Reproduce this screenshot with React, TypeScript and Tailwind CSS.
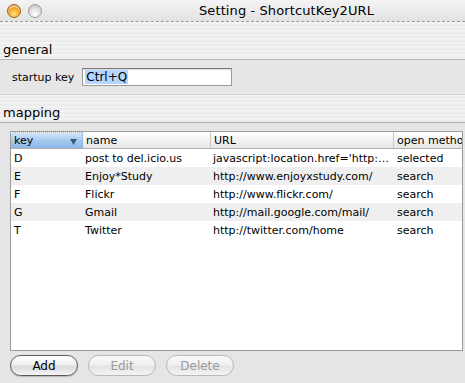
import React from "react";

const rows = [
  ["D", "post to del.icio.us", "javascript:location.href='http://del.icio.us/post?url='", "selected"],
  ["E", "Enjoy*Study", "http://www.enjoyxstudy.com/", "search"],
  ["F", "Flickr", "http://www.flickr.com/", "search"],
  ["G", "Gmail", "http://mail.google.com/mail/", "search"],
  ["T", "Twitter", "http://twitter.com/home", "search"],
];

export default function App() {
  return (
    <div
      className="w-[465px] h-[383px] overflow-hidden flex flex-col text-[#000] bg-[repeating-linear-gradient(180deg,#ececec_0px,#ececec_2px,#f3f3f3_2px,#f3f3f3_4px)]"
      style={{ fontFamily: '"DejaVu Sans", "Liberation Sans", sans-serif' }}
    >
      {/* title bar */}
      <div className="relative h-[22px] shrink-0 flex items-center border-b border-dashed border-[#9a9a9a] bg-[linear-gradient(180deg,#f4f4f4,#e2e2e2)]">
        <div className="ml-[7px] w-[14px] h-[14px] rounded-full border border-[#a0601a] bg-[radial-gradient(circle_at_50%_75%,#ffe080_0%,#f7a928_50%,#c26a10_100%)] shadow-[inset_0_2px_1px_rgba(255,255,255,0.6)]" />
        <div className="ml-[7px] w-[14px] h-[14px] rounded-full border border-[#9c9c9c] bg-[radial-gradient(circle_at_50%_75%,#ffffff_0%,#dedede_55%,#b5b5b5_100%)]" />
        <div className="ml-[157px] text-[13px] leading-none tracking-[0.1px]">Setting - ShortcutKey2URL</div>
      </div>

      {/* general header */}
      <div className="h-[38px] shrink-0 flex items-end pl-[3px] pb-[3px] border-b border-[#b4b4b4]">
        <span className="text-[13px] leading-none">general</span>
      </div>

      {/* startup key row */}
      <div className="h-[35px] shrink-0 flex items-center pl-[12px] bg-[#e6e6e6] border-b border-[#d2d2d2]">
        <span className="text-[11px] leading-none">startup key</span>
        <div className="ml-[8px] w-[150px] h-[18px] bg-white border border-[#9a9a9a] border-t-[#7a7a7a] flex items-center pl-[2px] shadow-[inset_0_1px_1px_rgba(0,0,0,0.15)]">
          <span className="text-[12px] leading-[14px] bg-[#b5d5ff] px-px">Ctrl+Q</span>
        </div>
      </div>

      {/* mapping header */}
      <div className="h-[28px] shrink-0 flex items-end pl-[3px] pb-[3px] border-b border-[#b4b4b4]">
        <span className="text-[13px] leading-none">mapping</span>
      </div>

      {/* table area */}
      <div className="flex-1 flex flex-col pt-[8px] pl-[10px] pr-[2px] bg-[#e5e5e5]">
        <div className="h-[220px] bg-white border border-[#9c9c9c] flex flex-col overflow-hidden">
          {/* header */}
          <div className="h-[17px] shrink-0 flex text-[11px] leading-none border-b border-[#b0b0b0] bg-[linear-gradient(180deg,#ffffff,#f2f2f2_50%,#e6e6e6)]">
            <div className="w-[72px] shrink-0 relative flex items-center pl-[3px] border-r border-[#8aa8cc] border-t border-dotted border-t-[#ffffff] bg-[linear-gradient(180deg,#d4e6f8,#a6c9ee_50%,#8cb8e8)]">
              key
              <svg className="absolute right-[5px] top-[6px]" width="7" height="6" viewBox="0 0 7 6">
                <path d="M0 0H7L3.5 6Z" fill="#3a5a80" />
              </svg>
            </div>
            <div className="w-[128px] shrink-0 flex items-center pl-[3px] border-r border-[#c8c8c8]">name</div>
            <div className="w-[183px] shrink-0 flex items-center pl-[3px] border-r border-[#c8c8c8]">URL</div>
            <div className="flex-1 flex items-center pl-[3px] whitespace-nowrap overflow-hidden">open method</div>
          </div>
          {rows.map((r, i) => (
            <div
              key={r[0]}
              className={`h-[18px] shrink-0 flex items-center text-[11px] leading-none ${i % 2 === 1 ? "bg-[#efefef]" : "bg-white"}`}
            >
              <div className="w-[72px] shrink-0 pl-[3px]">{r[0]}</div>
              <div className="w-[128px] shrink-0 pl-[2px]">{r[1]}</div>
              <div className="w-[183px] shrink-0 pl-[2px] pr-[2px] whitespace-nowrap overflow-hidden text-ellipsis">{r[2]}</div>
              <div className="flex-1 pl-[3px] whitespace-nowrap">{r[3]}</div>
            </div>
          ))}
        </div>

        {/* buttons */}
        <div className="flex gap-[10px] mt-[4px]">
          <button className="w-[68px] h-[21px] rounded-full border border-[#5a5a5a] bg-[linear-gradient(180deg,#ffffff,#f0f0f0_45%,#dcdcdc_55%,#f4f4f4)] text-[12px] leading-none text-black shadow-[0_1px_1px_rgba(0,0,0,0.2)]">
            Add
          </button>
          <button className="w-[68px] h-[21px] rounded-full border border-[#b8b8b8] bg-[linear-gradient(180deg,#fafafa,#f0f0f0_45%,#e4e4e4_55%,#f4f4f4)] text-[12px] leading-none text-[#9a9a9a]">
            Edit
          </button>
          <button className="w-[68px] h-[21px] rounded-full border border-[#b8b8b8] bg-[linear-gradient(180deg,#fafafa,#f0f0f0_45%,#e4e4e4_55%,#f4f4f4)] text-[12px] leading-none text-[#9a9a9a]">
            Delete
          </button>
        </div>
      </div>
    </div>
  );
}
